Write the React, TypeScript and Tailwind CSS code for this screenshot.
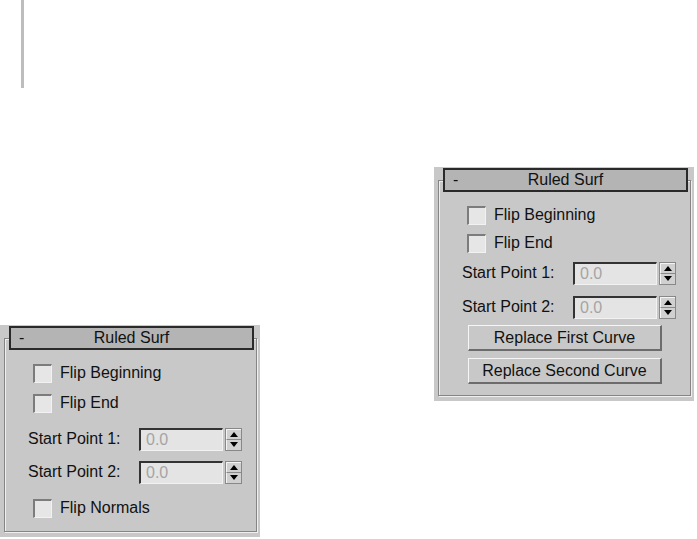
import React from "react";

const FONT = "font-['Liberation_Sans',Arial,sans-serif]";

function Checkbox({ label }: { label: string }) {
  return (
    <div className="flex items-center h-[24px] pl-[28px]">
      <div className="w-[19px] h-[19px] bg-[#e6e6e6] border-t-2 border-l-2 border-b border-r border-t-[#7c7c7c] border-l-[#7c7c7c] border-b-[#f2f2f2] border-r-[#f2f2f2]" />
      <span className="ml-[8px] text-[16px] text-[#111]">{label}</span>
    </div>
  );
}

function Spinner() {
  return (
    <div className="ml-[2px] w-[17px] h-[23px] flex flex-col border border-[#888]">
      <div className="flex-1 flex items-center justify-center bg-[#d0d0d0] border-t border-l border-[#f4f4f4] border-b border-b-[#8a8a8a]">
        <svg width="8" height="5" viewBox="0 0 8 5">
          <polygon points="4,0 8,5 0,5" fill="#000" />
        </svg>
      </div>
      <div className="flex-1 flex items-center justify-center bg-[#d0d0d0] border-l border-[#f4f4f4]">
        <svg width="8" height="5" viewBox="0 0 8 5">
          <polygon points="0,0 8,0 4,5" fill="#000" />
        </svg>
      </div>
    </div>
  );
}

function SpinRow({ label }: { label: string }) {
  return (
    <div className="flex items-center h-[24px] pl-[23px]">
      <span className="w-[111px] text-[16px] text-[#111]">{label}</span>
      <div className="w-[84px] h-[23px] flex items-center pl-[5px] bg-[#e4e4e4] border-t-2 border-l-2 border-b border-r border-t-[#333] border-l-[#333] border-b-[#f2f2f2] border-r-[#f2f2f2] text-[16px] text-[#a4a4a4]">
        0.0
      </div>
      <Spinner />
    </div>
  );
}

function Button({ label }: { label: string }) {
  return (
    <div className="ml-[29px] w-[194px] h-[26px] flex items-center justify-center bg-[#c8c8c8] border-t border-l border-[#f6f6f6] border-b-2 border-r-2 border-b-[#6c6c6c] border-r-[#6c6c6c] text-[16px] text-[#111]">
      {label}
    </div>
  );
}

function Rollout({ className, children }: { className: string; children: React.ReactNode }) {
  return (
    <div className={`w-[260px] bg-[#c8c8c8] pt-px pl-[4px] pr-[3px] pb-[5px] ${FONT} ${className}`}>
      <div className="relative z-10 ml-[5px] w-[245px] h-[24px] flex items-center bg-[#b4b4b4] border-2 border-[#2a2a2a] text-[16px] text-[#111]">
        <span className="w-[26px] pl-[8px]">-</span>
        <span className="flex-1 text-center pr-[26px]">Ruled Surf</span>
      </div>
      <div className="-mt-[12px] border border-[#858585] shadow-[1px_1px_0_#efefef,inset_1px_1px_0_#efefef] pt-[22px] pb-[11px] flex flex-col">
        {children}
      </div>
    </div>
  );
}

export default function App() {
  return (
    <div className="w-[697px] h-[539px] bg-white flex overflow-hidden">
      <div className="flex flex-col w-[260px]">
        <div className="ml-[21px] w-[3px] h-[88px] bg-[#bdbdbd]" />
        <Rollout className="mt-[237px]">
          <Checkbox label="Flip Beginning" />
          <div className="mt-[6px]">
            <Checkbox label="Flip End" />
          </div>
          <div className="mt-[12px]">
            <SpinRow label="Start Point 1:" />
          </div>
          <div className="mt-[9px]">
            <SpinRow label="Start Point 2:" />
          </div>
          <div className="mt-[12px]">
            <Checkbox label="Flip Normals" />
          </div>
        </Rollout>
      </div>
      <Rollout className="ml-[174px] mt-[167px] self-start">
        <Checkbox label="Flip Beginning" />
        <div className="mt-[4px]">
          <Checkbox label="Flip End" />
        </div>
        <div className="mt-[6px]">
          <SpinRow label="Start Point 1:" />
        </div>
        <div className="mt-[10px]">
          <SpinRow label="Start Point 2:" />
        </div>
        <div className="mt-[6px]">
          <Button label="Replace First Curve" />
        </div>
        <div className="mt-[7px]">
          <Button label="Replace Second Curve" />
        </div>
      </Rollout>
    </div>
  );
}
